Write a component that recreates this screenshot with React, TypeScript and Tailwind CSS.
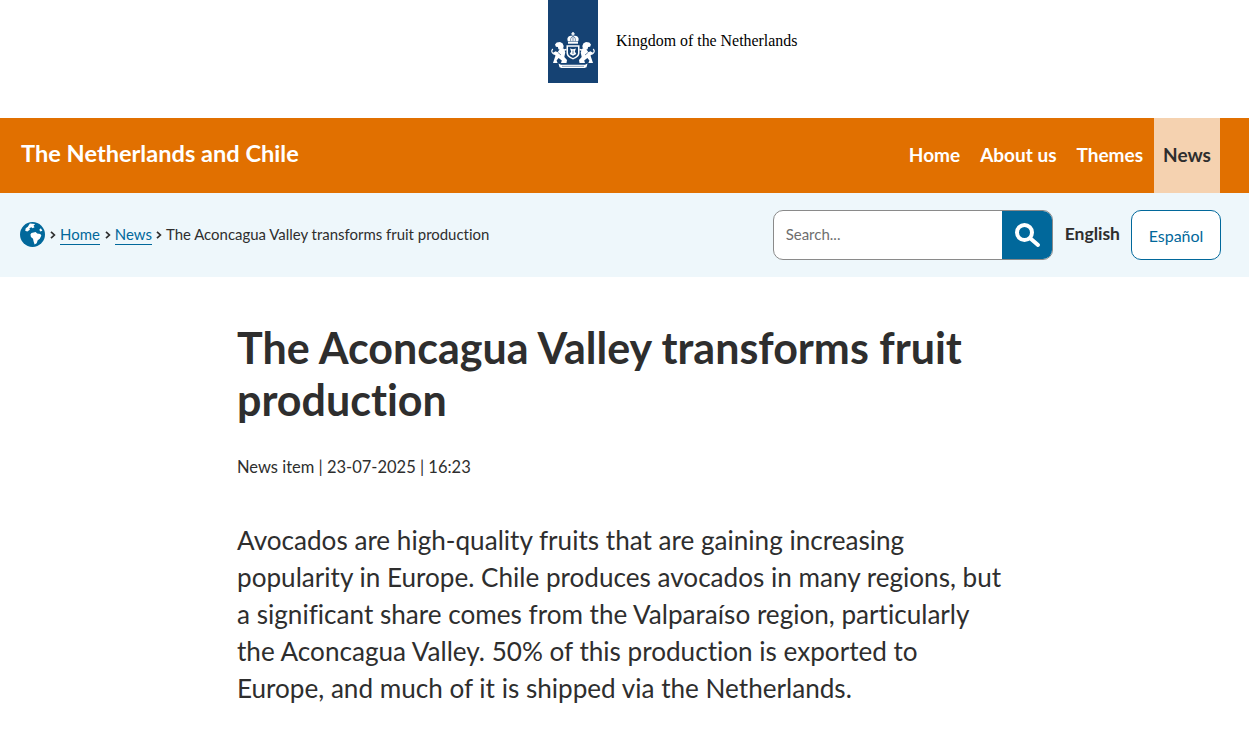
const sans = "font-['Lato','Noto_Sans',sans-serif] [font-variant-ligatures:none]";

const Lion = () => (
  <g>
    {/* head and mane */}
    <path d="M7 19.500l1.700-2 3.300-.6 2.500 1.300 1.200 2.700-.6 2.700-2.200 1.300-2.500-.7-.5-2.200-2-.2z" fill="#fff" />
    {/* body */}
    <path d="M12 24l3.800-.5 1.500 4-1 4.500 2.700 3-.5 3h-5.500l.8-2.500-3.200-2.500-2 2.500 1 2.500H5l1.500-4.500 1-3-3-2.500 3.200-1.700 1.800 1 1.500-2z" fill="#fff" />
    {/* tail */}
    <path d="M6.500 29.500C3.500 28 3 26 4.800 24" fill="none" stroke="#fff" strokeWidth="1.200" />
    {/* paw on shield */}
    <path d="M14 25.500l4.500-1" fill="none" stroke="#fff" strokeWidth="1.500" />
    <path d="M10 27.500l3 2.500" fill="none" stroke="#154273" strokeWidth=".6" />
  </g>
);

const Crest = () => (
  <svg viewBox="0 0 50 50" className="w-[50px] h-[50px]" fill="#fff">
    {/* crown */}
    <path d="M24.300 7h1.400v1.200h1v1.200h-1v1.100h-1.400V9.400h-1V8.200h1z" />
    <path d="M20 16.500c-1.500-3-.5-6 5-6s6.500 3 5 6z" />
    <path d="M22.800 16.300c-.6-2 0-4 2.200-5.500 2.200 1.500 2.800 3.500 2.200 5.500M25 11v5.300" fill="none" stroke="#154273" strokeWidth=".6" />
    <rect x="20" y="17" width="10" height="1.700" />
    {/* shield */}
    <path d="M18.500 20.300h13v7.700c0 3-2.500 4.800-6.500 6.500-4-1.700-6.500-3.500-6.500-6.500z" />
    <path d="M20 21.800h10V28c0 2.200-2 3.600-5 4.900-3-1.300-5-2.700-5-4.900z" fill="#154273" />
    <path d="M22 23.500l3 .8 3-.8-1.200 3 1.500 2.500-3.300 1.700-3.300-1.700 1.500-2.500z" />
    <path d="M25 25.500v3.500" stroke="#154273" strokeWidth=".7" fill="none" />
    {/* lions */}
    <Lion />
    <g transform="matrix(-1 0 0 1 50 0)">
      <Lion />
    </g>
    {/* motto ribbon */}
    <path d="M10.500 38.500l2.500 1.200h24l2.500-1.200-1 3.800-2 .7H13.500l-2-.7z" />
    <path d="M14 41.300h22" stroke="#154273" strokeWidth=".5" fill="none" />
  </svg>
);

const Globe = () => (
  <svg viewBox="0 0 24 24" className="w-[25px] h-[25px] shrink-0">
    <circle cx="12" cy="12" r="12" fill="#01689b" />
    <path
      fill="#fff"
      d="M9.500 1.500l5 .5-1.500 1.500 1 1.500-2 1-1-1-2 1 .5 1.500-2.500 1.500-2-.5.500-2.500 2-1.500zM11 10.500l4-1 1.500 1.500 3 .5 1 1.500-1.500 3-2 1.500-1 3-2 1-1-3-.5-2.500-2-1.500-.5-2.500zM20 6l1.500 2.500-2 .5-1-1.500z"
    />
  </svg>
);

const Chevron = () => (
  <svg viewBox="0 0 6 8" className="w-[6px] h-[8px] mx-[4px] shrink-0" fill="none" stroke="#2e2e2e" strokeWidth="1.700">
    <path d="M1 .8L4.400 4 1 7.200" />
  </svg>
);

const NavLink = ({ label }: { label: string }) => (
  <a className="flex items-center px-[10px] pb-[1px] text-white">{label}</a>
);

export default function App() {
  return (
    <div className={`${sans} bg-white text-[#2e2e2e] h-[737px] overflow-hidden`}>
      {/* Logo bar */}
      <div className="h-[118px] flex items-start pl-[548px]">
        <div className="w-[50px] h-[83px] bg-[#154273] flex items-end pb-[8px]">
          <Crest />
        </div>
        <span className="ml-[18px] mt-[32px] font-['Liberation_Serif',serif] text-[15.900px] leading-[18px] text-black">
          Kingdom of the Netherlands
        </span>
      </div>

      {/* Orange header */}
      <div className="h-[75px] bg-[#e17000] flex justify-between pl-[21px] pr-[29px]">
        <span className="self-center pb-[3px] text-[23.600px] font-bold text-white">The Netherlands and Chile</span>
        <nav className="flex text-[19px] font-bold">
          <NavLink label="Home" />
          <NavLink label="About us" />
          <NavLink label="Themes" />
          <a className="ml-[1px] w-[66px] flex items-center justify-center pb-[1px] bg-[#f5d2b0]">News</a>
        </nav>
      </div>

      {/* Breadcrumb + search */}
      <div className="h-[84px] bg-[#eef7fb] flex items-center justify-between pl-[20px] pr-[28px]">
        <div className="flex items-center pb-[1px] text-[14.950px]">
          <Globe />
          <span className="w-[1px]" />
          <Chevron />
          <a className="leading-[19px] text-[#01689b] border-b border-[#01689b]">Home</a>
          <span className="w-[1px]" />
          <Chevron />
          <a className="leading-[19px] text-[#01689b] border-b border-[#01689b]">News</a>
          <Chevron />
          <span>The Aconcagua Valley transforms fruit production</span>
        </div>
        <div className="flex items-center">
          <div className="w-[280px] h-[50px] flex bg-white border border-[#8a8a8a] rounded-[10px] overflow-hidden">
            <span className="flex-1 flex items-center pl-[12px] pb-[1px] text-[15px] text-[#6e6e6e]">Search...</span>
            <span className="w-[50px] bg-[#01689b] flex items-center justify-center">
              <svg viewBox="0 0 28 28" className="w-[28px] h-[28px]" fill="none" stroke="#fff">
                <circle cx="11.500" cy="11.500" r="7.500" strokeWidth="4" />
                <path d="M17.500 17.500l7.500 6.500" strokeWidth="4" strokeLinecap="round" />
              </svg>
            </span>
          </div>
          <span className="ml-[12px] pb-[2px] text-[17.500px] font-bold">English</span>
          <span className="ml-[11px] w-[90px] h-[50px] flex items-center justify-center pt-[1px] bg-white border border-[#01689b] rounded-[10px] text-[16px] text-[#01689b]">
            Español
          </span>
        </div>
      </div>

      {/* Article */}
      <main className="w-[770px] ml-[237px] pt-[45px]">
        <h1 className="text-[43px] leading-[52px] font-bold">The Aconcagua Valley transforms fruit production</h1>
        <p className="mt-[29px] text-[16.500px] leading-[24px]">News item | 23-07-2025 | 16:23</p>
        <p className="mt-[43px] text-[26.120px] leading-[37px]">
          Avocados are high-quality fruits that are gaining increasing popularity in Europe. Chile produces avocados in
          many regions, but a significant share comes from the Valparaíso region, particularly the Aconcagua Valley. 50%
          of this production is exported to Europe, and much of it is shipped via the Netherlands.
        </p>
      </main>
    </div>
  );
}
